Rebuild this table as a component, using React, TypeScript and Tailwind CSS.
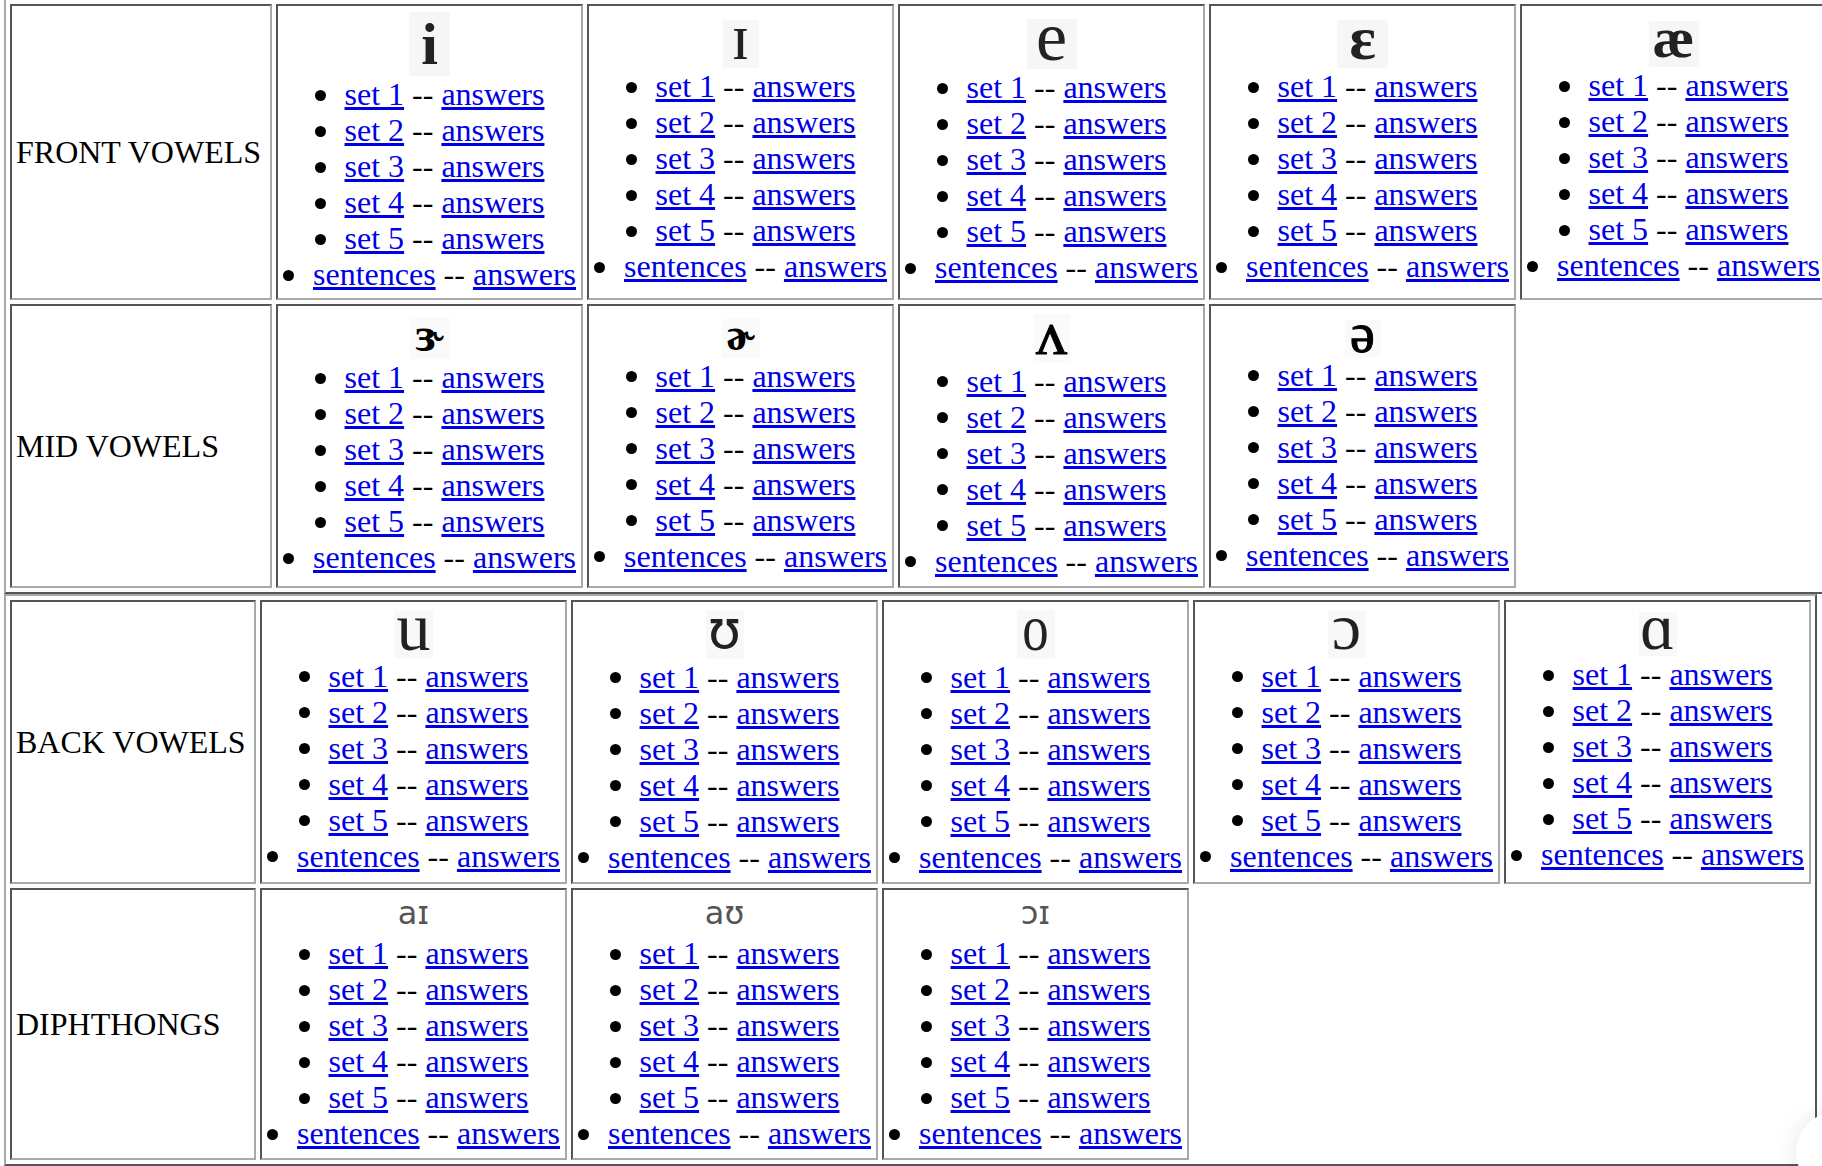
import React from "react";

type Sym = { s: string; box: string; glyph: string };

const cellCls =
  "border-2 border-t-[#555555] border-l-[#555555] border-b-[#a9a9a9] border-r-[#a9a9a9] p-[4px] flex flex-col items-center justify-center";

const labelCls =
  "border-2 border-t-[#555555] border-l-[#555555] border-b-[#a9a9a9] border-r-[#a9a9a9] p-[4px] flex items-center text-black whitespace-nowrap";

const tableCls =
  "w-max grid gap-[4px] p-[4px] border-2 border-t-[#a9a9a9] border-l-[#a9a9a9] border-b-[#555555] border-r-[#555555]";

function Line({ label }: { label: string }) {
  return (
    <li className="h-[36px] text-center whitespace-nowrap">
      <span className="inline-block w-[11px] h-[11px] rounded-full bg-black align-middle mb-[5px] mr-[19px]" />
      <a href="#" className="text-[#0000e6] underline">
        {label}
      </a>
      {" -- "}
      <a href="#" className="text-[#0000e6] underline">
        answers
      </a>
    </li>
  );
}

function VowelCell({ sym }: { sym: Sym }) {
  return (
    <div className={cellCls}>
      <div className={`flex items-center justify-center ${sym.box}`}>
        <span className={`leading-[28px] ${sym.glyph}`}>{sym.s}</span>
      </div>
      <ul className="w-full">
        {[1, 2, 3, 4, 5].map((n) => (
          <Line key={n} label={`set ${n}`} />
        ))}
        <Line label="sentences" />
      </ul>
    </div>
  );
}

const front: Sym[] = [
  { s: "i", box: "w-[41px] h-[64px] bg-[#f6f6f6]", glyph: "text-[60px] font-bold text-[#222222]" },
  { s: "ɪ", box: "w-[36px] h-[48px] bg-[#f7f7f7]", glyph: "text-[66px] text-[#222222] -translate-y-[7px]" },
  { s: "e", box: "w-[50px] h-[50px] bg-[#f6f6f6]", glyph: "text-[70px] text-[#222222] -translate-y-[7px]" },
  { s: "ɛ", box: "w-[51px] h-[48px] bg-[#f6f6f6]", glyph: "text-[62px] font-bold text-[#222222] -translate-y-[6px]" },
  { s: "æ", box: "w-[50px] h-[46px] bg-[#f6f6f6]", glyph: "text-[58px] font-bold text-[#222222] -translate-y-[6px]" },
];

const mid: Sym[] = [
  { s: "ɝ", box: "w-[40px] h-[42px] bg-[#fafafa]", glyph: "text-[48px] font-bold text-black -translate-y-[3px]" },
  { s: "ɚ", box: "w-[38px] h-[39px] bg-[#fafafa]", glyph: "text-[46px] font-bold text-black -translate-y-[3px]" },
  { s: "ʌ", box: "w-[36px] h-[49px] bg-[#fafafa]", glyph: "text-[62px] text-black [-webkit-text-stroke:1px_black] -translate-y-[5px]" },
  { s: "ə", box: "w-[36px] h-[37px] bg-[#fafafa]", glyph: "text-[56px] text-black [-webkit-text-stroke:1px_black] -translate-y-[5px]" },
];

const back: Sym[] = [
  { s: "u", box: "w-[38px] h-[47px] bg-[#f8f8f8]", glyph: "text-[68px] text-[#222222] -translate-y-[7px]" },
  { s: "ʊ", box: "w-[38px] h-[49px] bg-[#f8f8f8]", glyph: "text-[54px] text-[#222222] font-['DejaVu_Sans',sans-serif] -translate-y-[4px]" },
  { s: "o", box: "w-[38px] h-[49px] bg-[#f8f8f8]", glyph: "text-[66px] text-[#222222] -translate-y-[6px] scale-x-[0.8]" },
  { s: "ɔ", box: "w-[38px] h-[47px] bg-[#f8f8f8]", glyph: "text-[66px] text-[#222222] -translate-y-[7px]" },
  { s: "ɑ", box: "w-[38px] h-[44px] bg-[#f8f8f8]", glyph: "text-[66px] text-[#222222] -translate-y-[7px]" },
];

const diph: Sym[] = [
  { s: "aɪ", box: "w-[60px] h-[38px]", glyph: "text-[32px] text-[#555555] font-['DejaVu_Sans',sans-serif] -translate-y-[3px]" },
  { s: "aʊ", box: "w-[60px] h-[38px]", glyph: "text-[32px] text-[#555555] font-['DejaVu_Sans',sans-serif] -translate-y-[3px]" },
  { s: "ɔɪ", box: "w-[60px] h-[38px]", glyph: "text-[32px] text-[#555555] font-['DejaVu_Sans',sans-serif] -translate-y-[3px]" },
];

export default function App() {
  return (
    <div className="relative w-[1822px] h-[1166px] overflow-hidden bg-white font-['Liberation_Serif','DejaVu_Serif',serif] text-[32px] leading-[36px] text-black">
      <div className="pl-[4px] -mt-[2px] flex flex-col">
        <div className={`${tableCls} grid-cols-[262px_repeat(5,307px)] grid-rows-[296px_284px]`}>
          <div className={labelCls}>FRONT VOWELS</div>
          {front.map((s) => (
            <VowelCell key={s.s} sym={s} />
          ))}
          <div className={labelCls}>MID VOWELS</div>
          {mid.map((s) => (
            <VowelCell key={s.s} sym={s} />
          ))}
        </div>
        <div className={`${tableCls} grid-cols-[246px_repeat(5,307px)] grid-rows-[284px_272px]`}>
          <div className={labelCls}>BACK VOWELS</div>
          {back.map((s) => (
            <VowelCell key={s.s} sym={s} />
          ))}
          <div className={labelCls}>DIPHTHONGS</div>
          {diph.map((s) => (
            <VowelCell key={s.s} sym={s} />
          ))}
        </div>
      </div>
      <div className="absolute left-[1796px] top-[1112px] w-[80px] h-[80px] rounded-full bg-white shadow-[0_0_24px_rgba(0,0,0,0.10)]" />
    </div>
  );
}
